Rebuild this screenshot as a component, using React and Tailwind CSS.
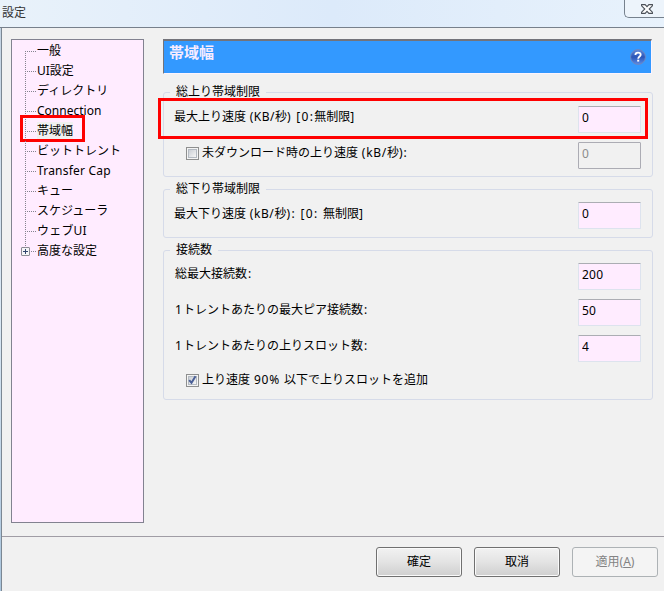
import React from "react";

const TREE = [
  { label: "一般", first: true },
  { label: "UI設定" },
  { label: "ディレクトリ" },
  { label: "Connection" },
  { label: "帯域幅", current: true },
  { label: "ビットトレント" },
  { label: "Transfer Cap", wide: true },
  { label: "キュー" },
  { label: "スケジューラ" },
  { label: "ウェブUI", wide: true },
  { label: "高度な設定", last: true },
];

function TreeItem({ item }) {
  return (
    <li className="relative flex h-[20px] items-center pl-[14px]">
      <span
        className={
          "absolute left-[13px] w-px bg-[repeating-linear-gradient(to_bottom,transparent_0_1px,#85858f_1px_2px)] " +
          (item.first ? "top-[10px] h-[10px]" : item.last ? "top-0 h-[6px]" : "top-0 h-[20px]")
        }
      />
      <span className="mt-[3px] mr-[1px] h-px w-[10px] bg-[repeating-linear-gradient(to_right,transparent_0_1px,#85858f_1px_2px)]" />
      {item.last && (
        <span className="absolute top-[7px] left-[9px] flex h-[9px] w-[9px] items-center justify-center rounded-[1px] border border-[#8c8c94] bg-[#f4f4f6]">
          <svg width="5" height="5" viewBox="0 0 5 5" shapeRendering="crispEdges">
            <path d="M0 2h5v1H0zM2 0h1v5H2z" fill="#31456e" />
          </svg>
        </span>
      )}
      <span
        className={
          "mt-[2px] h-[18px] leading-[18px] " +
          (item.current ? "bg-[#f0f0f0] " : "") +
          (item.wide ? "tracking-[0.2px]" : "")
        }
      >
        {item.label}
      </span>
      {item.current && <span className="absolute -top-[5px] left-[8px] h-[27px] w-[65px] border-[3px] border-[#ff0000]" />}
    </li>
  );
}

function Field({ value, disabled }) {
  return (
    <input
      readOnly
      value={value}
      disabled={disabled}
      className={
        "h-[27px] w-[63px] shrink-0 rounded-[1px] border px-[3px] pb-[5px] leading-none tracking-[0.2px] outline-none " +
        (disabled
          ? "border-[#acacb4] bg-[#f1f1f1] text-[#8c8c8c]"
          : "border-[#dde3ee] border-t-[#abadb3] bg-[#ffecff] text-black")
      }
    />
  );
}

function Row({ children, value, disabled }) {
  return (
    <div className="flex h-[27px] justify-between pr-[11px] pl-[11px]">
      <div className="flex h-[22px] items-center">{children}</div>
      <Field value={value} disabled={disabled} />
    </div>
  );
}

function Group({ title, className, children }) {
  return (
    <fieldset className={"w-[490px] rounded-[3px] border border-[#d6dbe9] " + className}>
      <legend className="ml-[6px] h-[17px] px-[6px] leading-[16px]">{title}</legend>
      {children}
    </fieldset>
  );
}

function Check({ checked, children }) {
  return (
    <div className="flex h-[22px] items-center pl-[11px]">
      <span className="mr-[3px] flex h-[13px] w-[13px] items-center justify-center border border-[#8e8f8f] bg-[#f4f4f4]">
        <span className="flex h-[9px] w-[9px] items-center justify-center border border-[#b4bac2] bg-linear-to-br from-[#cbcfd5] to-[#f6f6f6]">
          {checked && (
            <svg className="shrink-0" width="9" height="10" viewBox="0 0 9 10">
              <path d="M1.2 5.1 3.5 7.8 7.5 1.3" fill="none" stroke="#4a5f97" strokeWidth="2" />
            </svg>
          )}
        </span>
      </span>
      <span>{children}</span>
    </div>
  );
}

function Button({ children, disabled }) {
  return (
    <button
      disabled={disabled}
      className={
        "h-[30px] w-[86px] rounded-[3px] border pb-[1px] " +
        (disabled
          ? "border-[#adb2b5] bg-[#f4f4f4] text-[#838383]"
          : "border-[#707070] bg-linear-to-b from-[#f2f2f2] from-0% via-[#e4e4e4] via-48% to-[#cfcfcf] text-black shadow-[inset_0_0_0_1px_#fafafa]")
      }
    >
      {children}
    </button>
  );
}

export default function App() {
  return (
    <div className="flex h-[591px] w-[664px] flex-col overflow-hidden bg-[#f1f1f1] font-['Noto_Sans','Noto_Sans_CJK_JP',sans-serif] text-[12px] leading-[18px] whitespace-nowrap text-black">
      <header className="flex h-[28px] shrink-0 justify-between border-b border-[#77808b] bg-linear-to-r from-[#e9f2fa] via-[#dceafa] via-50% to-[#e8f2fc]">
        <h1 className="pt-[4px] pl-[2px] text-[#333]">設定</h1>
        <div className="flex h-[18px] w-[40px] justify-center rounded-bl-[5px] border-b border-l border-[#76818d] bg-[#edf4fb] pt-[4px] pl-[4px]">
          <svg width="12" height="10" viewBox="0 0 12 10">
            <path d="M.6.6h3.5L6 2.7 7.9.6h3.5v1.2L8.2 5l3.2 3.2v1.2H7.9L6 7.3 4.1 9.4H.6V8.2L3.8 5 .6 1.8z" fill="#fff" stroke="#4b5058" strokeWidth="1.1" />
          </svg>
        </div>
      </header>

      <div className="flex min-h-0 grow bg-linear-to-b from-[#c3d3e2] via-[#dbe9f5] to-[#a9c4dc] pl-px">
        <div className="flex min-w-0 grow flex-col border-l border-[#7b8793] bg-[#f1f1f1]">
          <main className="flex h-[509px] shrink-0 border-b border-[#a09da5] pt-[11px] pl-[9px]">
            <ul className="h-[484px] w-[133px] shrink-0 border border-[#828290] bg-[#ffecff]">
              {TREE.map((item) => (
                <TreeItem key={item.label} item={item} />
              ))}
            </ul>

            <section className="ml-[19px] w-[490px]">
              <div className="flex h-[35px] w-[489px] items-start justify-between border-t-2 border-r border-b border-l border-t-[#73737a] border-r-[#fdf4fd] border-b-[#fdf4fd] border-l-[#73737a] bg-[#3399ff] pr-[5px] pl-[5px]">
                <h2 className="pt-[2px] text-[15px] leading-[18px] font-bold text-[#f7ecff]">帯域幅</h2>
                <svg className="mt-[8px]" width="16" height="16" viewBox="0 0 16 16">
                  <defs>
                    <linearGradient id="help" x1="0" y1="0" x2="0" y2="1">
                      <stop offset="0" stopColor="#5f8ade" />
                      <stop offset=".5" stopColor="#2b55b8" />
                      <stop offset="1" stopColor="#5b8ce6" />
                    </linearGradient>
                  </defs>
                  <circle cx="8" cy="8" r="7.4" fill="url(#help)" stroke="#6d86c0" />
                  <path d="M5.4 6C5.4 4.300 6.500 3.600 8 3.600s2.700.8 2.700 2.200C10.700 7.500 8.200 7.600 8.200 9.700" fill="none" stroke="#fff" strokeWidth="1.8" />
                  <path d="M7.200 10.700h2v1.900h-2z" fill="#fff" />
                </svg>
              </div>

              <Group title="総上り帯域制限" className="mt-[10px] h-[93px]">
                <div className="relative mt-[5px]">
                  <Row value="0">
                    <span className="-ml-[1px] whitespace-pre">
                      最大上り速度<span className="tracking-[0.5px]"> (KB/</span>秒<span className="tracking-[1.3px]">) [0:</span>無制限]
                    </span>
                  </Row>
                  <span className="absolute -top-[8px] -left-[6px] h-[41px] w-[490px] border-[3px] border-[#ff0000]" />
                </div>
                <div className="mt-[9px]">
                  <Row value="0" disabled>
                    <Check>
                      未ダウンロード時の上り速度<span className="tracking-[0.7px]"> (kB/</span>秒<span className="tracking-[1px]">):</span>
                    </Check>
                  </Row>
                </div>
              </Group>

              <Group title="総下り帯域制限" className="mt-[4px] h-[57px]">
                <div className="mt-[4px]">
                  <Row value="0">
                    <span className="mt-[2px] -ml-[1px] whitespace-pre">
                      最大下り速度<span className="tracking-[0.6px]"> (kB/</span>秒<span className="tracking-[1.35px]">): [0: </span>無制限]
                    </span>
                  </Row>
                </div>
              </Group>

              <Group title="接続数" className="mt-[4px] h-[158px]">
                <div className="mt-[4px] flex flex-col gap-[9px]">
                  <Row value="200">総最大接続数<span className="pl-[1px]">:</span></Row>
                  <Row value="50">1<span className="pl-[1px]">トレントあたりの最大ピア接続数</span><span className="pl-[1px]">:</span></Row>
                  <Row value="4">1<span className="pl-[1px]">トレントあたりの上りスロット数</span><span className="pl-[1px]">:</span></Row>
                </div>
                <div className="mt-[7px] pl-[11px]">
                  <Check checked>
                    上り速度<span className="tracking-[0.8px]"> 90% </span>以下で上りスロットを追加
                  </Check>
                </div>
              </Group>
            </section>
          </main>

          <footer className="flex justify-end gap-[12px] pt-[10px] pr-[6px]">
            <Button>確定</Button>
            <Button>取消</Button>
            <Button disabled>
              適用(<u>A</u>)
            </Button>
          </footer>
        </div>
      </div>
    </div>
  );
}
